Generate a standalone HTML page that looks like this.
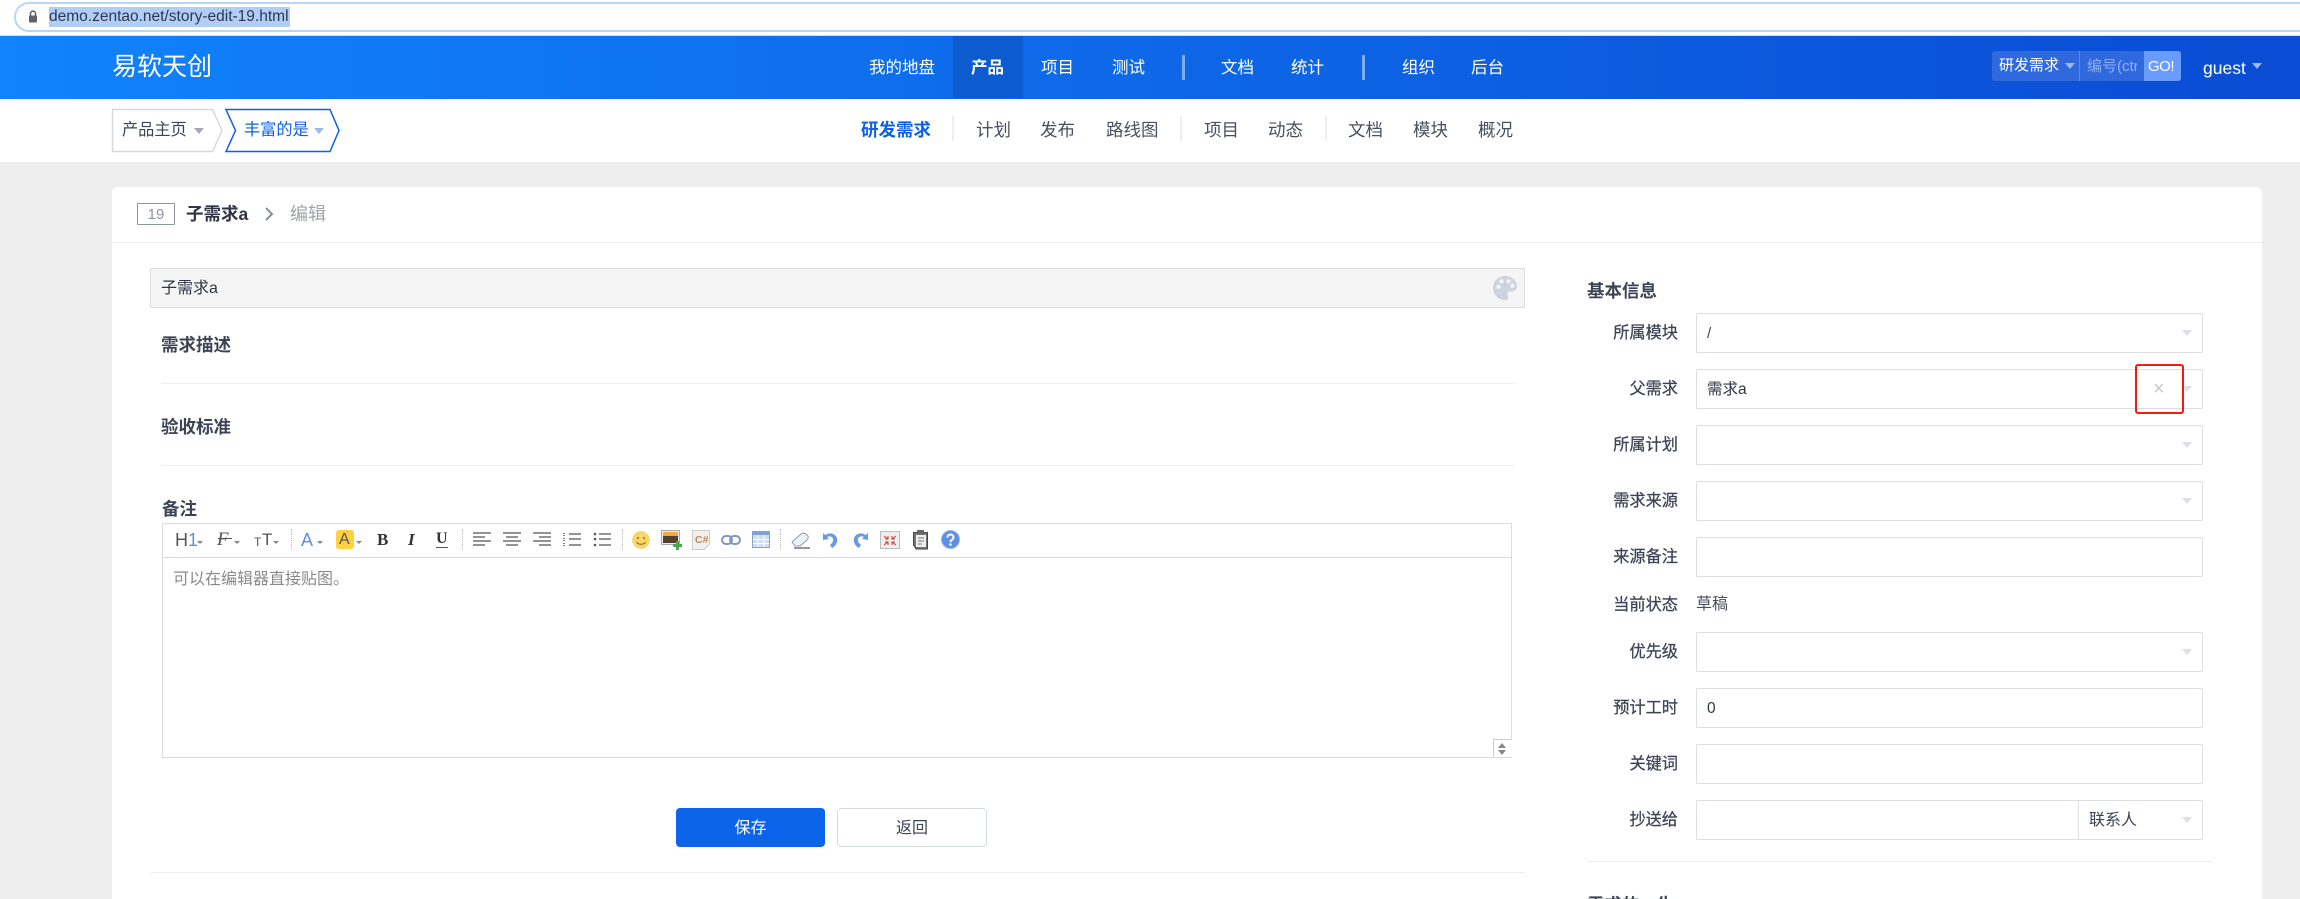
<!DOCTYPE html>
<html lang="zh-CN"><head><meta charset="utf-8"><title>子需求a - 编辑</title>
<style>
html,body{margin:0;padding:0;width:2300px;height:899px;overflow:hidden;background:#eee}
body{position:relative;font-family:"Liberation Sans","Noto Sans CJK SC",sans-serif;color:#3c4353}
.a,.t{position:absolute}
.t{white-space:nowrap;line-height:20px;height:20px}
.w{color:#fff;font-size:16.5px}
.s{font-size:17.5px;color:#4a4f5c}
.b{font-weight:700;font-size:17.5px;color:#3c4353}
.l{font-size:16.2px;color:#3c4353;width:120px;text-align:right;left:1558px;margin-top:1px;-webkit-text-stroke:.25px #3c4353}
.i{position:absolute;left:1696px;width:505px;height:38px;border:1px solid #dcdee3;border-radius:2px;background:#fff}
.c{position:absolute;width:0;height:0;border-left:5px solid transparent;border-right:5px solid transparent;border-top:6px solid #dcdfe6}
.sd{position:absolute;width:0;height:20px;top:529px;border-left:1px dotted #bbb}
.dc{position:absolute;top:541px;width:0;height:0;border-left:3px solid transparent;border-right:3px solid transparent;border-top:3px solid #888}
svg{position:absolute;overflow:visible}
</style></head><body>
<div class="a" style="left:0;top:0;width:2300px;height:36px;background:#fff;border-bottom:0"></div>
<div class="a" style="left:0;top:35px;width:2300px;height:1px;background:#ddd"></div>
<div class="a" style="left:14px;top:2px;width:2310px;height:26px;border:2px solid #b9d5f8;border-radius:15px;background:#fff"></div>
<svg style="left:28px;top:10px" width="10" height="13" viewBox="0 0 10 13"><path d="M2.500 6V3.600a2.500 2.500 0 0 1 5 0V6" fill="none" stroke="#5f6368" stroke-width="1.500"/><rect x="1" y="5.500" width="8" height="7" rx="1" fill="#5f6368"/></svg>
<div class="a" style="left:49px;top:7px;width:241px;height:20px;background:#b1cdf8"></div>
<div class="t" style="left:49px;top:7px;font-size:15.500px;color:#2c3a4f">demo.zentao.net/story-edit-19.html</div>

<div class="a" style="left:0;top:36px;width:2300px;height:63px;background:linear-gradient(90deg,#1183fb,#0a4cd3)"></div>
<div class="t" style="left:112px;top:55px;font-size:25px;line-height:25px;height:25px;color:#fff">易软天创</div>
<div class="t w" style="left:869px;top:58px">我的地盘</div>
<div class="a" style="left:953px;top:36px;width:70px;height:62px;background:#0d5ccf"></div>
<div class="t w" style="left:971px;top:58px;font-weight:700">产品</div>
<div class="t w" style="left:1041px;top:58px">项目</div>
<div class="t w" style="left:1112px;top:58px">测试</div>
<div class="a" style="left:1182px;top:55px;width:3px;height:25px;background:#7fadf2"></div>
<div class="t w" style="left:1221px;top:58px">文档</div>
<div class="t w" style="left:1291px;top:58px">统计</div>
<div class="a" style="left:1362px;top:55px;width:3px;height:25px;background:#7fadf2"></div>
<div class="t w" style="left:1402px;top:58px">组织</div>
<div class="t w" style="left:1471px;top:58px">后台</div>

<div class="a" style="left:1992px;top:51px;width:189px;height:30px;border-radius:3px;background:#3069de;overflow:hidden">
<div class="a" style="left:87px;top:0;width:1px;height:30px;background:#5a88e6"></div>
<div class="a" style="left:152px;top:0;width:37px;height:30px;background:#6a9bff"></div>
</div>
<div class="t" style="left:1999px;top:56px;color:#fff;font-size:15px">研发需求</div>
<div class="c" style="left:2065px;top:63px;border-top-color:#9db9ef"></div>
<div class="a" style="left:2087px;top:57px;width:50px;height:20px;overflow:hidden;white-space:nowrap;line-height:20px;color:#8fb0ee;font-size:15px">编号(ctrl</div>
<div class="t" style="left:2148px;top:57px;color:#fff;font-size:15px;letter-spacing:-.5px">GO!</div>
<div class="t" style="left:2203px;top:58px;color:#fff;font-size:17.500px">guest</div>
<div class="c" style="left:2252px;top:63px;border-top-color:#9db9ef"></div>

<div class="a" style="left:0;top:99px;width:2300px;height:63px;background:#fff"></div>
<svg style="left:112px;top:108px" width="230" height="45" viewBox="0 0 230 45"><path d="M.5 1.500H100.500L110 22.500L100.500 43.500H.5Z" fill="#fff" stroke="#d6d8de" stroke-width="1.500"/><path d="M114 1.500H218L227 22.500L218 43.500H114L123.500 22.500Z" fill="#fff" stroke="#0c60e1" stroke-width="1.500"/></svg>
<div class="t" style="left:122px;top:120px;font-size:16.200px;color:#3c4353">产品主页</div>
<div class="c" style="left:194px;top:128px;border-top-color:#a5a8b0"></div>
<div class="t" style="left:244px;top:120px;font-size:16.200px;color:#0c60e1">丰富的是</div>
<div class="c" style="left:314px;top:128px;border-top-color:#a0b8e8"></div>

<div class="t" style="left:861px;top:120px;font-size:17.500px;font-weight:700;color:#0c60e1">研发需求</div>
<div class="a" style="left:952px;top:116px;width:2px;height:25px;background:#eee"></div>
<div class="t s" style="left:976px;top:120px">计划</div>
<div class="t s" style="left:1040px;top:120px">发布</div>
<div class="t s" style="left:1106px;top:120px">路线图</div>
<div class="a" style="left:1180px;top:116px;width:2px;height:25px;background:#eee"></div>
<div class="t s" style="left:1204px;top:120px">项目</div>
<div class="t s" style="left:1268px;top:120px">动态</div>
<div class="a" style="left:1325px;top:116px;width:2px;height:25px;background:#eee"></div>
<div class="t s" style="left:1348px;top:120px">文档</div>
<div class="t s" style="left:1413px;top:120px">模块</div>
<div class="t s" style="left:1478px;top:120px">概况</div>

<div class="a" style="left:112px;top:187px;width:2150px;height:712px;background:#fff;border-radius:6px 6px 0 0"></div>
<div class="a" style="left:112px;top:242px;width:2150px;height:1px;background:#eee"></div>
<div class="a" style="left:137px;top:203px;width:36px;height:20px;border:1px solid #8e95a3;border-radius:1px;text-align:center;line-height:21px;font-size:15px;color:#8e95a3">19</div>
<div class="t" style="left:186px;top:204px;font-size:17.500px;font-weight:700;color:#2f3543">子需求a</div>
<svg style="left:264px;top:207px" width="10" height="14" viewBox="0 0 10 14"><path d="M2 1L8 7L2 13" fill="none" stroke="#8a8f9a" stroke-width="2"/></svg>
<div class="t" style="left:290px;top:204px;font-size:18px;color:#a0a3aa">编辑</div>

<div class="a" style="left:150px;top:268px;width:1373px;height:38px;background:#f5f5f5;border:1px solid #dcdcdc;border-radius:2px"></div>
<div class="t" style="left:161px;top:279px;font-size:16px;color:#2f3543">子需求a</div>
<svg style="left:1493px;top:276px" width="24" height="24" viewBox="0 0 24 24"><path fill="#cdd3df" fill-rule="evenodd" d="M12 0C5.400 0 0 5.400 0 12s5.400 12 12 12c2 0 3.300-1.200 3.300-2.800 0-1.900-1.600-2.700-.8-4.400.7-1.400 2.300-1.500 4-1.500 3.100 0 5.500-1.600 5.500-4.800C24 4.500 18.600 0 12 0zM5.500 13a2.200 2.200 0 1 1 0-4.400 2.200 2.200 0 0 1 0 4.400zM8.500 7.500a2.200 2.200 0 1 1 0-4.400 2.200 2.200 0 0 1 0 4.400zm7 0a2.200 2.200 0 1 1 0-4.400 2.200 2.200 0 0 1 0 4.400zm4 4.500a2.200 2.200 0 1 1 0-4.400 2.200 2.200 0 0 1 0 4.400z"/></svg>

<div class="t b" style="left:161px;top:335px">需求描述</div>
<div class="a" style="left:161px;top:383px;width:1354px;height:1px;background:#eee"></div>
<div class="t b" style="left:161px;top:417px">验收标准</div>
<div class="a" style="left:161px;top:465px;width:1354px;height:1px;background:#eee"></div>
<div class="t b" style="left:162px;top:499px">备注</div>

<div class="a" style="left:162px;top:523px;width:1348px;height:233px;border:1px solid #dcdcdc;background:#fff"></div>
<div class="a" style="left:163px;top:557px;width:1348px;height:1px;background:#dcdcdc"></div>

<div class="t" style="left:175px;top:530px;font-size:18px;color:#555">H<span style="color:#5b8fe8">1</span></div>
<div class="dc" style="left:197px"></div>
<div class="t" style="left:217px;top:530px;font-size:19px;font-family:'Liberation Serif',serif;font-style:italic;color:#555">F</div><div class="a" style="left:218px;top:538px;width:14px;height:1px;background:#555"></div>
<div class="dc" style="left:234px"></div>
<div class="t" style="left:254px;top:532px;font-size:12px;color:#555">T</div><div class="t" style="left:262px;top:530px;font-size:17px;color:#555">T</div>
<div class="dc" style="left:273px"></div>
<div class="sd" style="left:291px"></div>
<div class="t" style="left:301px;top:530px;font-size:18px;color:#5b8fe8">A</div>
<div class="dc" style="left:317px"></div>
<div class="a" style="left:336px;top:530px;width:18px;height:19px;background:#ffd040;border-radius:3px"></div>
<div class="t" style="left:339px;top:530px;font-size:16px;color:#555">A</div>
<div class="dc" style="left:356px"></div>
<div class="t" style="left:377px;top:530px;font-size:17px;font-weight:700;font-family:'Liberation Serif',serif;color:#333">B</div>
<div class="t" style="left:408px;top:530px;font-size:17px;font-weight:700;font-style:italic;font-family:'Liberation Serif',serif;color:#333">I</div>
<div class="t" style="left:436px;top:529px;font-size:16px;font-weight:700;font-family:'Liberation Serif',serif;color:#333">U</div><div class="a" style="left:436px;top:547px;width:12px;height:1px;background:#555"></div>
<div class="sd" style="left:462px"></div>

<svg style="left:473px;top:532px" width="140" height="16" viewBox="0 0 140 16" fill="none" stroke="#555" stroke-width="1.300">
<path d="M0 1H18M0 5H12M0 9H18M0 13H12"/>
<path d="M30 1H48M33 5H45M30 9H48M33 13H45"/>
<path d="M60 1H78M66 5H78M60 9H78M66 13H78"/>
<path d="M96 2H108M96 7H108M96 13H108"/><path d="M91 1V4M91 6V9M91 11V15" stroke-width="1.500" stroke-dasharray="1 1"/>
<path d="M126 2H138M126 7H138M126 13H138"/><circle cx="122" cy="2" r="1.300" fill="#555" stroke="none"/><circle cx="122" cy="7" r="1.300" fill="#555" stroke="none"/><circle cx="122" cy="13" r="1.300" fill="#555" stroke="none"/>
</svg>
<div class="sd" style="left:622px"></div>

<svg style="left:632px;top:531px" width="18" height="18" viewBox="0 0 18 18"><circle cx="9" cy="9" r="8.500" fill="#f8d66a" stroke="#ecc463" stroke-width=".5"/><circle cx="6" cy="7" r="1" fill="#8b6a20"/><circle cx="12" cy="7" r="1" fill="#8b6a20"/><path d="M4.500 11C6 14 12 14 13.500 11" fill="none" stroke="#8b6a20"/></svg>
<svg style="left:661px;top:530px" width="21" height="20" viewBox="0 0 21 20"><rect x=".5" y=".5" width="18" height="14" fill="#eee" stroke="#aaa"/><rect x="2" y="2" width="15" height="4" fill="#f3a93b"/><rect x="2" y="6" width="15" height="7" fill="#54432c"/><path d="M15 11h3v3h3v3h-3v3h-3v-3h-3v-3h3z" fill="#4aa84a"/></svg>
<svg style="left:692px;top:530px" width="18" height="20" viewBox="0 0 18 20"><path d="M.5.5H17.500V14L12 19.500H.5Z" fill="#f0f0f0" stroke="#ccc"/></svg>
<div class="t" style="left:695px;top:530px;font-size:10.500px;font-weight:700;color:#b98a50">C#</div>
<svg style="left:721px;top:533px" width="20" height="14" viewBox="0 0 20 14" fill="none" stroke="#8298bb" stroke-width="2"><rect x="1" y="3" width="10" height="8" rx="4"/><rect x="9" y="3" width="10" height="8" rx="4"/></svg>
<svg style="left:752px;top:531px" width="18" height="17" viewBox="0 0 18 17"><rect width="18" height="17" fill="#cfdcf2"/><rect width="18" height="4" fill="#7ea3dc"/><path d="M0 8.500H18M0 12.500H18M6 4V17M12 4V17" stroke="#fff"/><rect x=".5" y=".5" width="17" height="16" fill="none" stroke="#8aa2c6"/></svg>
<div class="sd" style="left:780px"></div>
<svg style="left:791px;top:532px" width="19" height="17" viewBox="0 0 19 17"><path d="M1 10L10 2C11 1 13 1 15 2L17 4C17.500 5 17.500 6 16 8L9 14H4Z" fill="#eef1f6" stroke="#8a9ab5" stroke-width="1"/><path d="M3 16H19" stroke="#555" stroke-width="1.200"/></svg>
<svg style="left:822px;top:531px" width="16" height="18" viewBox="0 0 16 18"><path d="M1 2L1 9L7 8L5 6C9 4 12 7 11 10C10.500 12 9 13 8 14L10 17C14 15 16 11 15 7C13 2 7 1 3.500 4Z" fill="#6b9ae0"/></svg>
<svg style="left:853px;top:531px" width="16" height="18" viewBox="0 0 16 18"><path d="M15 2L15 9L9 8L11 6C7 4 4 7 5 10C5.500 12 7 13 8 14L6 17C2 15 0 11 1 7C3 2 9 1 12.500 4Z" fill="#6b9ae0"/></svg>
<svg style="left:880px;top:531px" width="20" height="18" viewBox="0 0 20 18"><rect x=".5" y=".5" width="19" height="17" fill="#eee" stroke="#bbb"/><path d="M4 5L8 8M8 5V8H5M16 5L12 8M12 5V8H15M4 14L8 11M8 14V11H5M16 14L12 11M12 14V11H15" fill="none" stroke="#d0342c" stroke-width="1"/></svg>
<svg style="left:911px;top:530px" width="18" height="20" viewBox="0 0 18 20"><path d="M2.500 2.500H16.500V19H5L2.500 15Z" fill="#777" stroke="#444"/><rect x="5" y="5" width="10" height="12" fill="#eee"/><path d="M7 8H13M7 11H13M7 14H11" stroke="#777"/><rect x="6" y="0" width="7" height="4" fill="#666"/></svg>
<svg style="left:941px;top:530px" width="19" height="19" viewBox="0 0 19 19"><circle cx="9.500" cy="9.500" r="9" fill="#5d8fe4" stroke="#9ab8ea"/><path d="M6.500 7.500C6.500 3.500 12.500 3.500 12.500 7.500C12.500 10 9.500 9.500 9.500 12" fill="none" stroke="#fff" stroke-width="2"/><circle cx="9.500" cy="14.500" r="1.300" fill="#fff"/></svg>

<div class="t" style="left:173px;top:570px;font-size:16px;color:#8a8a8a">可以在编辑器直接贴图。</div>
<div class="a" style="left:1493px;top:739px;width:18px;height:17px;border-top:1px solid #ccc;border-left:1px solid #ccc;background:#fff"></div>
<svg style="left:1497px;top:743px" width="10" height="12" viewBox="0 0 10 12"><path d="M5 0L9 5H1ZM1 7H9L5 12Z" fill="#888"/></svg>

<div class="a" style="left:676px;top:808px;width:149px;height:39px;background:#0c64eb;border-radius:4px;color:#fff;text-align:center;line-height:41px;font-size:16px">保存</div>
<div class="a" style="left:837px;top:808px;width:148px;height:37px;border:1px solid #d5dbe3;border-radius:4px;background:#fff;color:#3c4353;text-align:center;line-height:39px;font-size:16px">返回</div>
<div class="a" style="left:150px;top:872px;width:1375px;height:1px;background:#eee"></div>

<div class="t b" style="left:1587px;top:281px">基本信息</div>
<div class="t l" style="top:322px">所属模块</div>
<div class="i" style="top:313px"></div><div class="t" style="left:1707px;top:324px;font-size:15px;color:#3c4353">/</div><div class="c" style="left:2182px;top:330px"></div>
<div class="t l" style="top:378px">父需求</div>
<div class="i" style="top:369px"></div><div class="t" style="left:1707px;top:380px;font-size:15.500px;color:#2f3543">需求a</div><div class="c" style="left:2182px;top:386px"></div>
<div class="t" style="left:2153px;top:379px;font-size:20px;color:#c9c9c9">×</div>
<div class="a" style="left:2135px;top:364px;width:45px;height:46px;border:2.500px solid #f01c14;border-radius:3px"></div>
<div class="t l" style="top:434px">所属计划</div>
<div class="i" style="top:425px"></div><div class="c" style="left:2182px;top:442px"></div>
<div class="t l" style="top:490px">需求来源</div>
<div class="i" style="top:481px"></div><div class="c" style="left:2182px;top:498px"></div>
<div class="t l" style="top:546px">来源备注</div>
<div class="i" style="top:537px"></div>
<div class="t l" style="top:594px">当前状态</div>
<div class="t" style="left:1696px;top:595px;font-size:16px;color:#4a4f5c">草稿</div>
<div class="t l" style="top:641px">优先级</div>
<div class="i" style="top:632px"></div><div class="c" style="left:2182px;top:649px"></div>
<div class="t l" style="top:697px">预计工时</div>
<div class="i" style="top:688px"></div><div class="t" style="left:1707px;top:699px;font-size:15.500px;color:#2f3543">0</div>
<div class="t l" style="top:753px">关键词</div>
<div class="i" style="top:744px"></div>
<div class="t l" style="top:809px">抄送给</div>
<div class="i" style="top:800px"></div><div class="a" style="left:2078px;top:801px;width:1px;height:38px;background:#dcdee3"></div>
<div class="t" style="left:2089px;top:811px;font-size:16px;color:#3c4353">联系人</div><div class="c" style="left:2182px;top:817px"></div>
<div class="a" style="left:1587px;top:861px;width:625px;height:1px;background:#eee"></div>
<div class="t b" style="left:1587px;top:895px">需求的一生</div>
</body></html>
